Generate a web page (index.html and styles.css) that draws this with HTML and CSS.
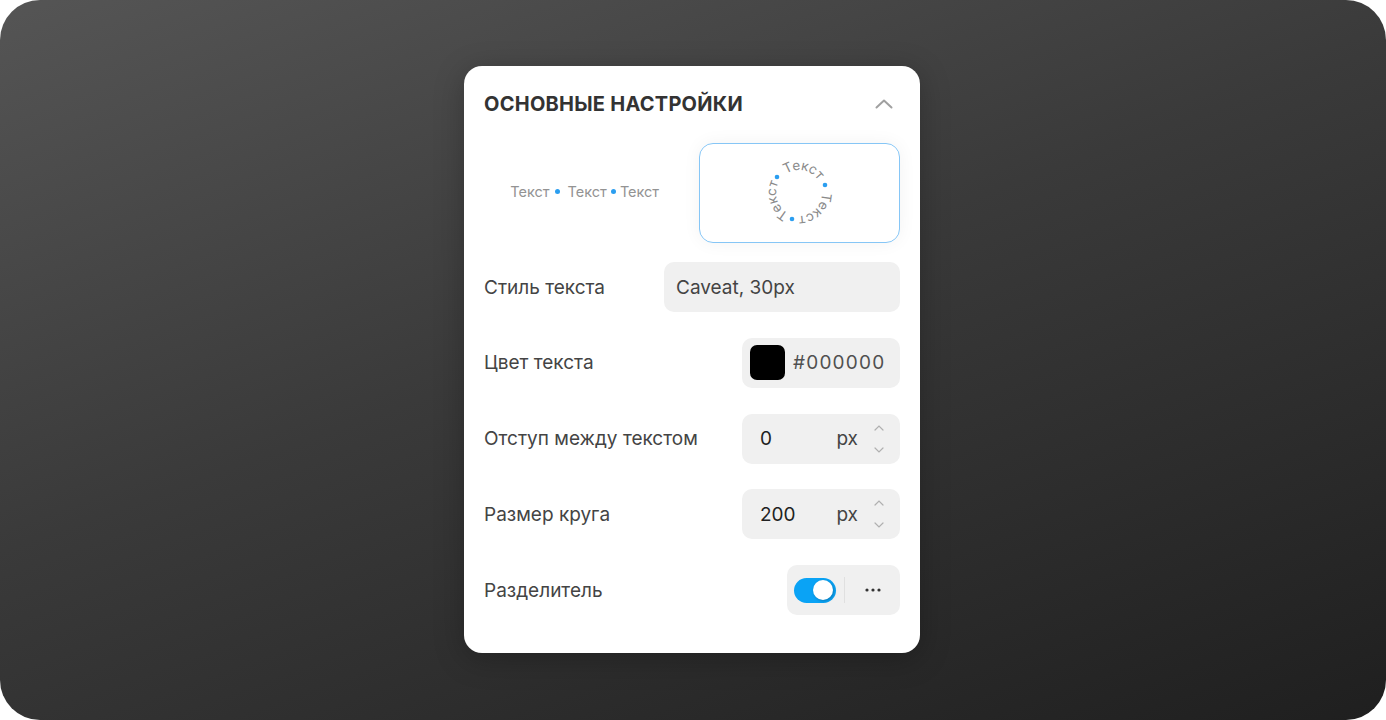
FILE: index.html
```html
<!DOCTYPE html>
<html lang="ru">
<head>
    <meta charset="UTF-8">
    <meta name="viewport" content="width=device-width, initial-scale=1.0">
    <title>Основные настройки</title>
    <link rel="stylesheet" href="styles.css">
</head>
<body>
    <div class="stage">
        <div class="panel">
            <div class="panel-header">
                <h2>Основные настройки</h2>
                <svg class="chevron" width="18" height="10" viewBox="0 0 18 10">
                    <path d="M1.5 8.5 L9 1.5 L16.5 8.5" fill="none" stroke="#a0a0a0" stroke-width="2" stroke-linecap="round" stroke-linejoin="round"/>
                </svg>
            </div>

            <div class="layouts">
                <div class="layout">
                    <div class="line-text">
                        <span>Текст</span><i class="dot wide"></i><span>Текст</span><i class="dot"></i><span>Текст</span>
                    </div>
                </div>
                <div class="layout active">
                    <svg class="circle-text" width="80" height="80" viewBox="-40 -40 80 80">
                        <defs>
                            <path id="ring" d="M 23 0 A 23 23 0 1 1 -23 0 A 23 23 0 1 1 23 0"/>
                        </defs>
                        <text class="ring-label"><textPath href="#ring" startOffset="112" text-anchor="middle">Текст</textPath></text>
                        <text class="ring-label"><textPath href="#ring" startOffset="18" text-anchor="middle">Текст</textPath></text>
                        <text class="ring-label"><textPath href="#ring" startOffset="64.5" text-anchor="middle">Текст</textPath></text>
                        <circle cx="-22" cy="-16" r="2.3" fill="#2b9ef0"/>
                        <circle cx="26" cy="-8" r="2.3" fill="#2b9ef0"/>
                        <circle cx="-7" cy="26" r="2.3" fill="#2b9ef0"/>
                    </svg>
                </div>
            </div>

            <div class="rows">
                <div class="row">
                    <span class="label">Стиль текста</span>
                    <div class="field field-font">Caveat, 30px</div>
                </div>
                <div class="row">
                    <span class="label">Цвет текста</span>
                    <div class="field field-color">
                        <span class="swatch"></span>
                        <span class="hex">#000000</span>
                    </div>
                </div>
                <div class="row">
                    <span class="label">Отступ между текстом</span>
                    <div class="field field-number">
                        <span class="value">0</span>
                        <span class="unit">px</span>
                        <span class="spin">
                            <svg width="10" height="6" viewBox="0 0 10 6"><path d="M1 5 L5 1 L9 5" fill="none" stroke="#b0b0b0" stroke-width="1.2" stroke-linecap="round"/></svg>
                            <svg width="10" height="6" viewBox="0 0 10 6"><path d="M1 1 L5 5 L9 1" fill="none" stroke="#b0b0b0" stroke-width="1.2" stroke-linecap="round"/></svg>
                        </span>
                    </div>
                </div>
                <div class="row">
                    <span class="label">Размер круга</span>
                    <div class="field field-number">
                        <span class="value">200</span>
                        <span class="unit">px</span>
                        <span class="spin">
                            <svg width="10" height="6" viewBox="0 0 10 6"><path d="M1 5 L5 1 L9 5" fill="none" stroke="#b0b0b0" stroke-width="1.2" stroke-linecap="round"/></svg>
                            <svg width="10" height="6" viewBox="0 0 10 6"><path d="M1 1 L5 5 L9 1" fill="none" stroke="#b0b0b0" stroke-width="1.2" stroke-linecap="round"/></svg>
                        </span>
                    </div>
                </div>
                <div class="row">
                    <span class="label">Разделитель</span>
                    <div class="field field-toggle">
                        <span class="toggle"><span class="knob"></span></span>
                        <span class="sep"></span>
                        <span class="more">
                            <svg width="18" height="4" viewBox="0 0 18 4">
                                <circle cx="3" cy="2" r="1.6" fill="#333"/>
                                <circle cx="9" cy="2" r="1.6" fill="#333"/>
                                <circle cx="15" cy="2" r="1.6" fill="#333"/>
                            </svg>
                        </span>
                    </div>
                </div>
            </div>
        </div>
    </div>
</body>
</html>
```

FILE: styles.css
```css
* {
    margin: 0;
    padding: 0;
    box-sizing: border-box;
}

body {
    font-family: Inter, "Noto Sans", sans-serif;
    background: #fff;
    color: #444;
}

.stage {
    width: 1386px;
    height: 720px;
    border-radius: 40px;
    background: linear-gradient(160deg, #555555 0%, #3a3a3a 45%, #1f1f1f 100%);
    display: flex;
    align-items: center;
    justify-content: center;
    padding: 0 2px 1px 0;
}

.panel {
    width: 456px;
    background: #fff;
    border-radius: 18px;
    padding: 24px 20px 38px;
    box-shadow: 0 6px 30px rgba(0, 0, 0, 0.25);
}

.panel-header {
    display: flex;
    align-items: center;
    justify-content: space-between;
    height: 28px;
    padding-right: 7px;
}

.panel-header h2 {
    font-size: 20px;
    font-weight: 700;
    text-transform: uppercase;
    color: #333;
    letter-spacing: 0.25px;
}

.layouts {
    display: grid;
    grid-template-columns: 1fr 1fr;
    gap: 13px;
    margin-top: 25px;
}

.layout {
    height: 100px;
    border-radius: 14px;
    border: 1px solid transparent;
    display: flex;
    align-items: center;
    justify-content: center;
}

.layout.active {
    border-color: #86c6f6;
    box-shadow: 0 0 18px rgba(0, 0, 0, 0.05);
}

.line-text {
    display: flex;
    align-items: center;
    font-size: 14.5px;
    color: #939393;
    margin-bottom: 3px;
}

.dot {
    width: 5px;
    height: 5px;
    border-radius: 50%;
    background: #2b9ef0;
    margin: 0 4px;
}

.dot.wide {
    margin: 0 8px 0 5px;
}

.ring-label {
    font-family: Inter, "Noto Sans", sans-serif;
    font-size: 13.5px;
    fill: #8a8a8a;
}

.rows {
    display: flex;
    flex-direction: column;
    gap: 25.75px;
    margin-top: 19px;
}

.row {
    display: flex;
    align-items: center;
    justify-content: space-between;
    height: 50px;
}

.label {
    font-size: 19px;
    color: #444;
}

.field {
    height: 50px;
    background: #f0f0f0;
    border-radius: 10px;
    display: flex;
    align-items: center;
    font-size: 19px;
    color: #444;
}

.field-font {
    width: 236px;
    padding-left: 12px;
}

.field-color {
    width: 158px;
    padding: 0 12px 0 8px;
    gap: 8px;
    color: #505050;
}

.hex {
    letter-spacing: 1.2px;
}

.swatch {
    width: 35px;
    height: 35px;
    border-radius: 7px;
    background: #000;
}

.field-number {
    width: 158px;
    padding-left: 18px;
}

.field-number .value {
    flex: 1;
    color: #222;
}

.field-number .unit {
    color: #444;
}

.spin {
    width: 42px;
    display: flex;
    flex-direction: column;
    align-items: center;
    gap: 16px;
}

.spin svg {
    display: block;
}

.field-toggle {
    width: 113px;
    padding-left: 7px;
}

.toggle {
    width: 42px;
    height: 25px;
    border-radius: 13px;
    background: #0aa3f5;
    display: flex;
    align-items: center;
    justify-content: flex-end;
    padding-right: 3px;
}

.knob {
    width: 20px;
    height: 20px;
    border-radius: 50%;
    background: #fff;
    box-shadow: 1px 1px 3px rgba(0, 0, 0, 0.25);
}

.sep {
    width: 1px;
    height: 26px;
    background: #e0e0e0;
    margin-left: 8px;
}

.more {
    flex: 1;
    display: flex;
    justify-content: center;
}

.more svg {
    display: block;
}
```
